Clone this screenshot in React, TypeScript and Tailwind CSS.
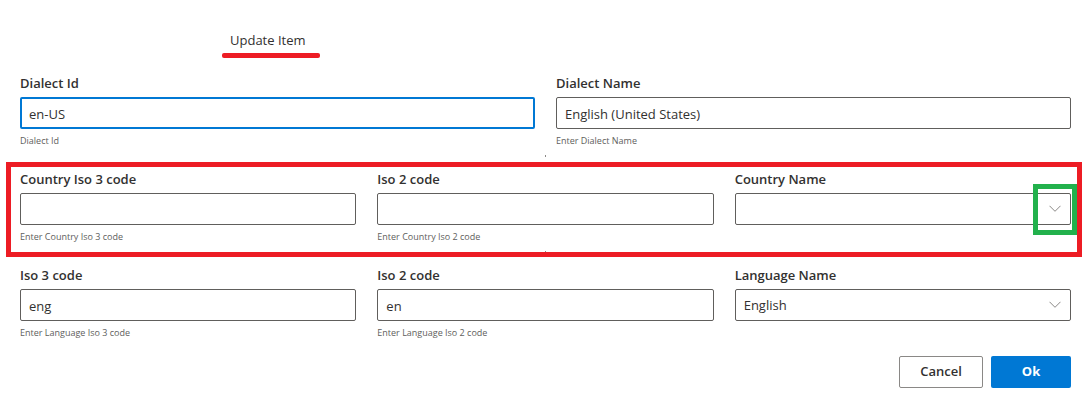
import type { ReactNode } from "react";

type FieldProps = {
  id: string;
  label: string;
  hint?: string;
  children: ReactNode;
};

function Field({ id, label, hint, children }: FieldProps) {
  return (
    <div className="flex min-w-0 flex-col">
      <label htmlFor={id} className="mb-1 text-[13px] leading-5 font-semibold text-[#323130]">
        {label}
      </label>
      {children}
      {hint && (
        <p id={`${id}-hint`} className="mt-1 text-[9px] leading-4 text-[#605e5c]">
          {hint}
        </p>
      )}
    </div>
  );
}

type TextFieldProps = {
  id: string;
  label: string;
  hint: string;
  value?: string;
  active?: boolean;
};

function TextField({ id, label, hint, value = "", active = false }: TextFieldProps) {
  return (
    <Field id={id} label={label} hint={hint}>
      <input
        id={id}
        type="text"
        defaultValue={value}
        aria-describedby={`${id}-hint`}
        className={
          active
            ? "h-8 w-full rounded-xs border-2 border-[#0078d4] bg-white px-[7px] pt-[2px] text-[13px] text-[#323130] outline-none"
            : "h-8 w-full rounded-xs border border-[#605e5c] bg-white px-2 pt-[2px] text-[13px] text-[#323130] outline-none focus:border-[#0078d4]"
        }
      />
    </Field>
  );
}

type SelectFieldProps = {
  id: string;
  label: string;
  options: string[];
  highlighted?: boolean;
};

function SelectField({ id, label, options, highlighted = false }: SelectFieldProps) {
  return (
    <Field id={id} label={label}>
      <div className="relative">
        <select
          id={id}
          defaultValue={options[0]}
          className="h-8 w-full appearance-none rounded-xs border border-[#605e5c] bg-white pt-[2px] pr-8 pl-2 text-[13px] text-[#323130] outline-none focus:border-[#0078d4]"
        >
          {options.map((option) => (
            <option key={option} value={option}>
              {option}
            </option>
          ))}
        </select>
        <svg
          viewBox="0 0 12 8"
          className="pointer-events-none absolute top-3 right-[10px] h-2 w-3"
          fill="none"
          stroke="#8a8886"
          strokeWidth="1"
          aria-hidden="true"
        >
          <path d="M0.5 0.8 L6 6.3 L11.5 0.8" />
        </svg>
        {highlighted && (
          <span className="pointer-events-none absolute -top-[9px] -right-[6px] -bottom-[10px] w-11 border-5 border-[#22b14c]" />
        )}
      </div>
    </Field>
  );
}

function Divider() {
  return (
    <div className="flex h-5 items-start justify-center pt-[6px]" aria-hidden="true">
      <span className="h-[2px] w-px bg-[#8a8886]" />
    </div>
  );
}

export default function App() {
  return (
    <form
      className="bg-white pt-[30px] pr-[15px] pb-4 pl-5 font-['Open_Sans','Noto_Sans',sans-serif] text-[#323130]"
      onSubmit={(event) => event.preventDefault()}
    >
      <header className="mb-[15px] ml-[202px] flex">
        <div className="flex flex-col">
          <h1 className="mb-[3px] pr-[14px] pl-2 text-[13px] leading-5 font-normal">Update Item</h1>
          <span className="h-[5px] rounded-xs bg-[#ed1c24]" />
        </div>
      </header>

      <div className="grid grid-cols-2 gap-x-[21px]">
        <TextField id="dialect-id" label="Dialect Id" hint="Dialect Id" value="en-US" active />
        <TextField
          id="dialect-name"
          label="Dialect Name"
          hint="Enter Dialect Name"
          value="English (United States)"
        />
      </div>

      <Divider />

      <div className="relative">
        <div className="grid grid-cols-3 gap-x-[21px]">
          <TextField id="country-iso3" label="Country Iso 3 code" hint="Enter Country Iso 3 code" />
          <TextField id="country-iso2" label="Iso 2 code" hint="Enter Country Iso 2 code" />
          <SelectField id="country-name" label="Country Name" options={[""]} highlighted />
        </div>
        <span className="pointer-events-none absolute -top-[7px] -right-[11px] -bottom-3 -left-[14px] border-5 border-[#ed1c24]" />
      </div>

      <Divider />

      <div className="grid grid-cols-3 gap-x-[21px]">
        <TextField id="language-iso3" label="Iso 3 code" hint="Enter Language Iso 3 code" value="eng" />
        <TextField id="language-iso2" label="Iso 2 code" hint="Enter Language Iso 2 code" value="en" />
        <SelectField id="language-name" label="Language Name" options={["English"]} />
      </div>

      <div className="mt-[15px] flex justify-end gap-2">
        <button
          type="button"
          className="h-8 w-[84px] rounded-xs border border-[#8a8886] bg-white text-[13px] font-semibold"
        >
          Cancel
        </button>
        <button
          type="submit"
          className="h-8 w-20 rounded-xs bg-[#0078d4] text-[13px] font-bold text-white"
        >
          Ok
        </button>
      </div>
    </form>
  );
}
